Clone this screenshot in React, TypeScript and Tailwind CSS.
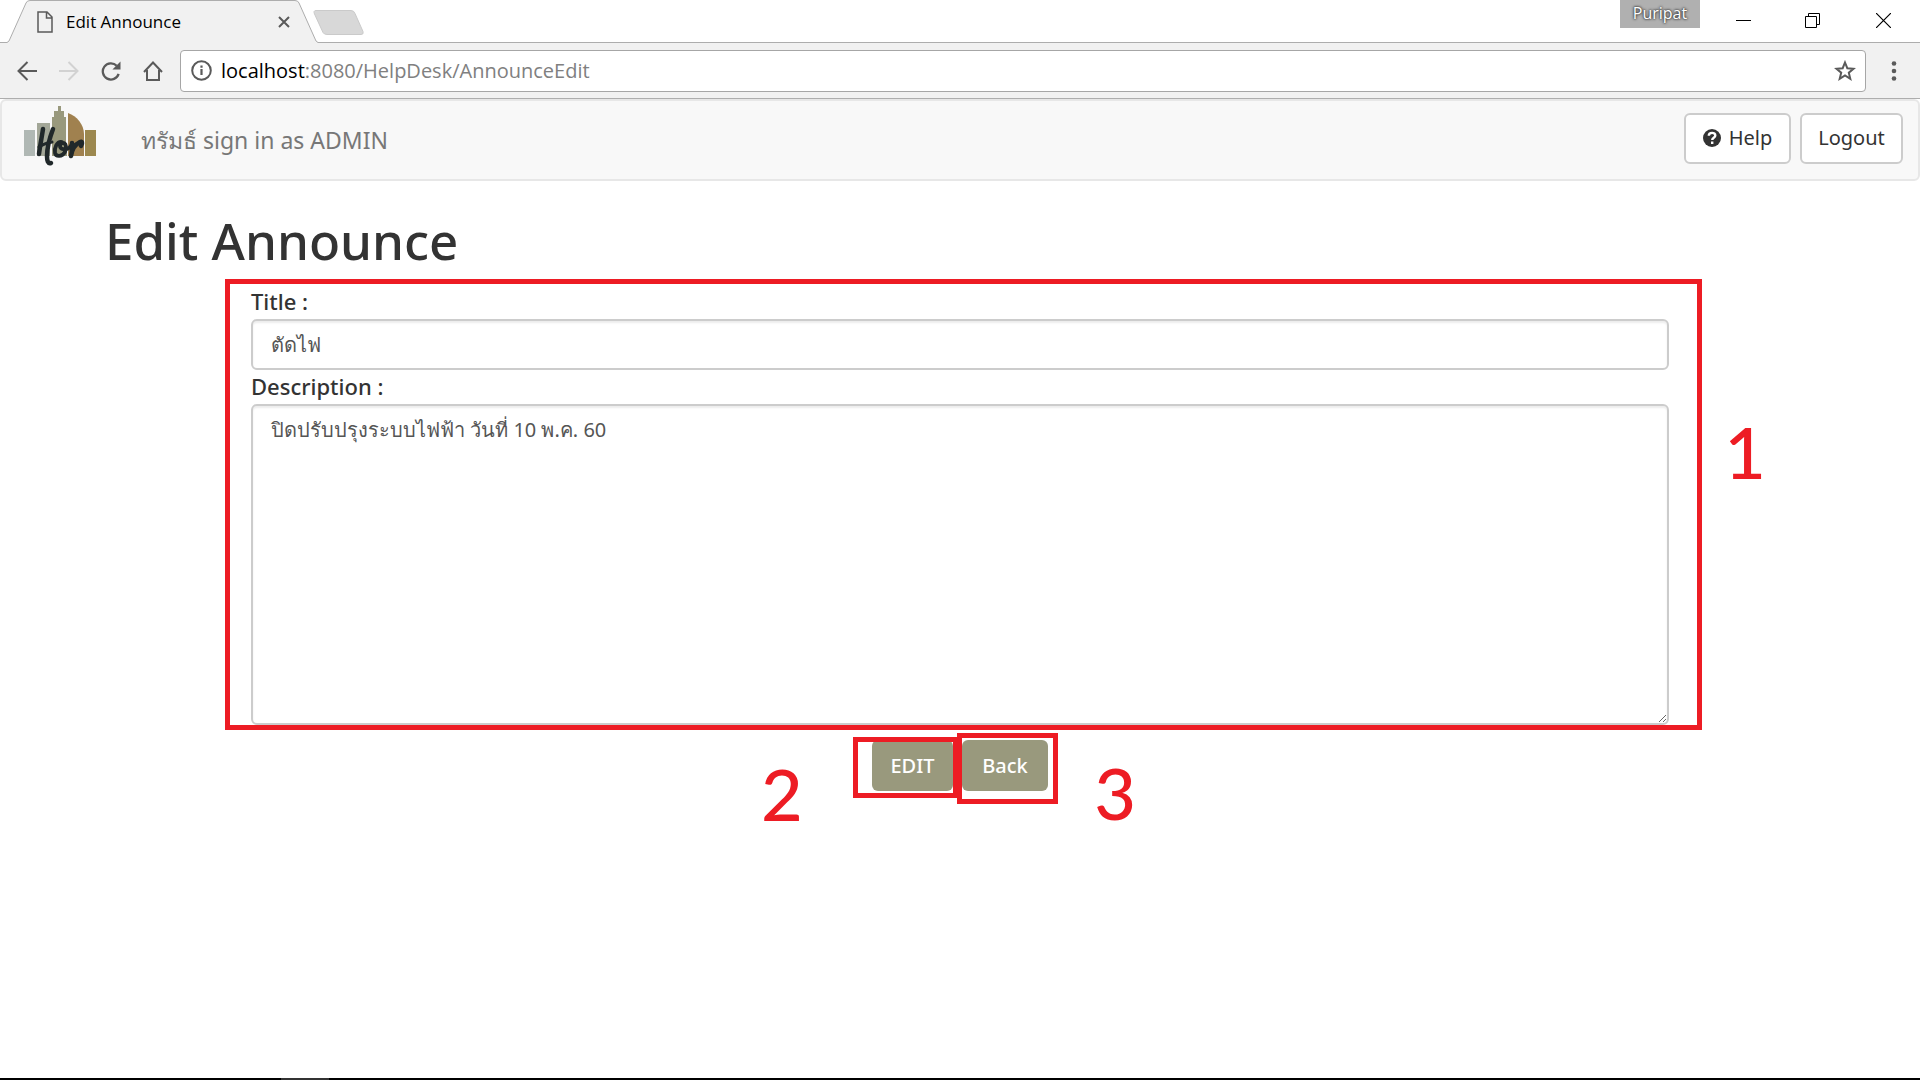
import React from "react";

const INK = "text-[#5a5a5a]";

function Digit({ children, className }: { children: string; className: string }) {
  return (
    <span className={`pointer-events-none absolute font-['Lato',sans-serif] text-[72px] leading-[72px] font-medium text-[#ed1c24] ${className}`}>
      {children}
    </span>
  );
}

function Logo() {
  return (
    <svg width="72" height="62" viewBox="0 0 72 62" aria-label="Hor" role="img">
      <rect x="0" y="25" width="11" height="26" fill="#b0b8b4" />
      <rect x="13" y="18" width="13" height="33" fill="#a3a798" />
      <path d="M28 51V12h2V6h4V1h3v5h3v6h2v26h1v13z" fill="#99997d" />
      <path d="M44 51V8C53 11 60 20 60 29v22z" fill="#a0814f" />
      <rect x="61" y="25" width="11" height="26" fill="#9c884f" />
      <g fill="none" stroke="#20282a" strokeLinecap="round" strokeLinejoin="round">
        <path d="M19 24c-1 7-3 17-4 25" strokeWidth="4.500" />
        <path d="M29 24c-3 8-6 20-6 27 0 5 1 8 4 7" strokeWidth="4.500" />
        <path d="M15 42c4-3 9-4 13-5" strokeWidth="3" />
        <path d="M38 37c-5-1-8 6-7 11 1 4 7 4 10-1 2-4 1-9-2-9-4 0-4 6 0 6 4 1 7-1 9-5" strokeWidth="3.800" />
        <path d="M48 38c0 5 0 9-1 13 1-7 5-12 9-14 2-1 3 1 1 4" strokeWidth="4.500" />
      </g>
    </svg>
  );
}

function TabStrip() {
  return (
    <div className="flex h-[42px] items-start justify-between bg-white">
      <div className="flex">
        <div className="relative z-10 h-[43px] w-[320px]">
          <svg className="absolute inset-0" width="320" height="43" viewBox="0 0 320 43" aria-hidden="true">
            <path d="M-1 42.500H7L9 41 26 3Q27 .5 30 .5H295Q298 .5 299 3L316 41l2 1.500H321V44H-1z" fill="#f1f1f1" stroke="#adadad" />
          </svg>
          <div className="relative flex h-[43px] items-center pl-[37px] pr-[30px]">
            <svg width="16" height="22" viewBox="0 0 16 22" fill="none" stroke="#5a5a5a" strokeWidth="1.500" aria-hidden="true">
              <path d="M1 1h9l5 5v15H1zM9.500 1v6H15" />
            </svg>
            <span className="ml-[13px] flex-1 text-[17px] text-black">Edit Announce</span>
            <button aria-label="Close tab" className={`flex size-3 items-center justify-center ${INK}`}>
              <svg width="12" height="12" viewBox="0 0 12 12" stroke="currentColor" strokeWidth="2"><path d="M1 1l10 10M11 1L1 11" /></svg>
            </button>
          </div>
        </div>
        <button aria-label="New tab" className="mt-2.5 -ml-[7px] h-[25px]">
          <svg width="52" height="25" viewBox="0 0 52 25"><path d="M3 .5H38q3 0 4 3l8 18q1 3-2 3H14q-3 0-4-2L1.500 4Q0 .5 3 .5z" fill="#d8d8d8" stroke="#cacaca" /></svg>
        </button>
      </div>
      <div className="flex items-start text-black">
        <span className="mr-[36px] flex h-7 w-20 items-center justify-center bg-[#b0b0b0] pb-0.5 text-[16px] text-white [text-shadow:0_0_3px_#222,0_0_2px_#333]">Puripat</span>
        <button aria-label="Minimize" className="mt-[13px] mr-[54px]">
          <svg width="15" height="15" viewBox="0 0 15 15" stroke="currentColor"><path d="M0 7.500H15" /></svg>
        </button>
        <button aria-label="Restore" className="mt-[13px] mr-[56px]">
          <svg width="15" height="15" viewBox="0 0 15 15" fill="none" stroke="currentColor"><path d="M.5 3.500h11v11H.5zM3.500 3.500v-3h11v11h-3" /></svg>
        </button>
        <button aria-label="Close window" className="mt-[13px] mr-[29px]">
          <svg width="15" height="15" viewBox="0 0 15 15" stroke="currentColor" strokeWidth="1.200"><path d="M0 0l15 15M15 0L0 15" /></svg>
        </button>
      </div>
    </div>
  );
}

function Toolbar() {
  return (
    <div className={`flex h-[57px] items-center border-y border-[#adadad] bg-[#f1f1f1] pl-[17px] pr-[23px] ${INK}`}>
      <nav aria-label="Browser" className="flex items-center gap-[22px]">
        <button aria-label="Back to previous page">
          <svg width="20" height="20" viewBox="0 0 20 20" fill="none" stroke="currentColor" strokeWidth="2"><path d="M20 10H2M10.500 1L1.500 10l9 9" /></svg>
        </button>
        <button aria-label="Forward" className="text-[#d2d2d2]">
          <svg width="20" height="20" viewBox="0 0 20 20" fill="none" stroke="currentColor" strokeWidth="2"><path d="M0 10H18M9.500 1l9 9-9 9" /></svg>
        </button>
        <button aria-label="Reload">
          <svg width="20" height="20" viewBox="0 0 21 20" fill="none" stroke="currentColor" strokeWidth="2.400"><path d="M18.500 13A8.500 8.500 0 1 1 16.500 4.500" /><path d="M20.500 0v8.500H12z" fill="currentColor" stroke="none" /></svg>
        </button>
        <button aria-label="Home">
          <svg width="20" height="20" viewBox="0 0 20 20" fill="none" stroke="currentColor" strokeWidth="2"><path d="M1 11l9-9.500L19 11M4 9v10h12V9" /></svg>
        </button>
      </nav>
      <div className="ml-[17px] flex h-[42px] flex-1 items-center rounded border border-[#a6a6a6] bg-white pl-2.5 pr-[9px]">
        <svg width="21" height="21" viewBox="0 0 21 21" fill="none" stroke="currentColor" strokeWidth="2" aria-hidden="true">
          <circle cx="10.500" cy="10.500" r="9.300" /><path d="M10.500 9v6M10.500 5.500v2.200" strokeWidth="2.200" />
        </svg>
        <a href="#" className="ml-[9px] flex-1 text-[20px] text-[#808080]"><span className="text-black">localhost</span>:8080/HelpDesk/AnnounceEdit</a>
        <button aria-label="Bookmark">
          <svg width="22" height="21" viewBox="0 0 22 21" fill="none" stroke="currentColor" strokeWidth="2"><path d="M11 2.500l2.300 5.700 6.200.5-4.700 4 1.500 6.100L11 15.500l-5.300 3.300 1.500-6.100-4.700-4 6.200-.5z" /></svg>
        </button>
      </div>
      <button aria-label="Menu" className="ml-[25px]">
        <svg width="6" height="20" viewBox="0 0 6 20" fill="currentColor"><circle cx="3" cy="2.500" r="2.300" /><circle cx="3" cy="10" r="2.300" /><circle cx="3" cy="17.500" r="2.300" /></svg>
      </button>
    </div>
  );
}

function NavBar() {
  const button = "flex h-[51px] items-center justify-center rounded-md border-2 border-[#ccc] bg-white text-[20px] text-[#333]";
  return (
    <header className="flex h-[82px] items-center rounded-md border-2 border-[#e7e7e7] bg-[#f8f8f8] pl-[22px] pr-[15px]">
      <a href="#" className="-mt-2"><Logo /></a>
      <p className="ml-[45px] flex-1 text-[23px] text-[#777]">ทรัมธ์ sign in as ADMIN</p>
      <div className="-mt-1 flex gap-[9px]">
        <button className={`${button} w-[107px] gap-2`}>
          <svg width="18" height="18" viewBox="0 0 18 18" aria-hidden="true">
            <circle cx="9" cy="9" r="9" fill="#333" />
            <path d="M5.800 6.800C5.800 2.800 12.500 3 12.300 6.600 12.200 8.800 9.200 8.700 9.200 11M9.200 12.500v2.500" fill="none" stroke="#fff" strokeWidth="2.400" />
          </svg>
          Help
        </button>
        <button className={`${button} w-[103px]`}>Logout</button>
      </div>
    </header>
  );
}

export default function App() {
  const label = "block h-[34px] text-[22px] leading-[32px] font-medium";
  const field = "block w-full rounded-md border-2 border-[#ccc] bg-white px-[18px] text-[20px] text-[#555] shadow-[inset_0_2px_2px_rgba(0,0,0,0.075)] outline-none";
  const action = "h-[51px] rounded-md bg-[#99997d] text-[20px] font-medium text-white";
  const frame = "pointer-events-none absolute border-5 border-[#ed1c24]";
  return (
    <div className="flex min-h-screen flex-col bg-white font-['Open_Sans','Noto_Sans',sans-serif]">
      <TabStrip />
      <Toolbar />
      <div className="flex-1 font-['Noto_Sans',sans-serif]">
        <NavBar />
        <main className="px-[105px] pt-[29px]">
          <h1 className="text-[51px] leading-[60px] font-medium text-[#333]">Edit Announce</h1>
          <form className="mx-[146px] mt-[15px] text-[#333]" onSubmit={(e) => e.preventDefault()}>
            <div className="relative">
              <label htmlFor="title" className={label}>Title :</label>
              <input id="title" defaultValue="ตัดไฟ" className={`${field} h-[51px]`} />
              <label htmlFor="description" className={label}>Description :</label>
              <textarea id="description" defaultValue="ปิดปรับปรุงระบบไฟฟ้า วันที่ 10 พ.ค. 60" className={`${field} h-[321px] py-2 leading-[32px]`} />
              <div className={`${frame} -top-[6px] -right-[33px] -bottom-[5px] -left-[26px]`} />
              <Digit className="top-[130px] -right-[97px]">1</Digit>
            </div>
            <div className="mt-[15px] flex justify-center gap-[9px]">
              <div className="relative">
                <button className={`${action} w-[81px]`}>EDIT</button>
                <div className={`${frame} -top-[3px] -right-[5px] -bottom-[7px] -left-[19px]`} />
                <Digit className="top-[17px] -left-[111px]">2</Digit>
              </div>
              <div className="relative">
                <button className={`${action} w-[86px]`}>Back</button>
                <div className={`${frame} -top-[7px] -right-[10px] -bottom-[13px] -left-[5px]`} />
                <Digit className="top-[16px] -right-[88px]">3</Digit>
              </div>
            </div>
          </form>
        </main>
      </div>
      <footer className="flex h-0.5 bg-black pl-[281px]"><div className="w-12 bg-[#333]" /></footer>
    </div>
  );
}
